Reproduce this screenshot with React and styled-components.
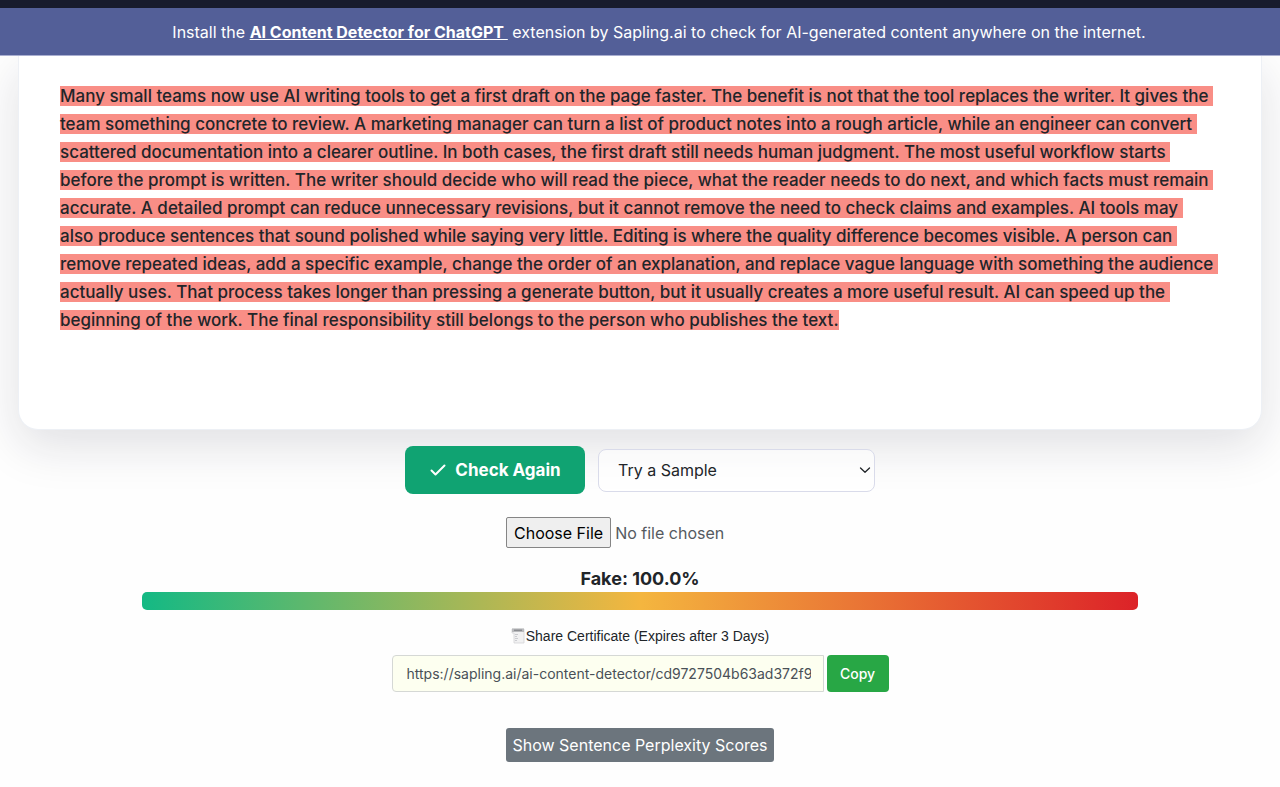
import React, { useState } from 'react'
import styled, { createGlobalStyle } from 'styled-components'

const GlobalStyle = createGlobalStyle`
    * {
        box-sizing: border-box;
    }
    body {
        margin: 0;
        background: #fefefe;
        color: #212529;
        font-family: Inter, 'Liberation Sans', sans-serif;
        font-size: 16px;
        line-height: 24px;
    }
    button, input, select {
        font-family: inherit;
    }
`

const TopStrip = styled.div`
    height: 8px;
    background: #171b2d;
`

const Banner = styled.header`
    position: relative;
    z-index: 1;
    padding: 12px 16px 11px 54px;
    border-bottom: 1px solid #a9aed0;
    background: #535f98;
    color: #fff;
    font-size: 16px;
    text-align: center;
    white-space: pre-wrap;
`

const BannerLink = styled.a`
    color: #fff;
    font-weight: 700;
    text-decoration: underline;
`

const ResultCard = styled.section`
    min-height: 374px;
    margin: 0 18px;
    padding: 26px 47px 24px 41px;
    border: 1px solid #edf0f5;
    border-top: 0;
    border-radius: 0 0 20px 20px;
    background: #fff;
    box-shadow: 0 16px 48px rgba(20, 20, 45, 0.13);
`

const ResultText = styled.p`
    margin: 0;
    font-size: 17px;
    font-weight: 500;
    line-height: 28px;
    white-space: pre-wrap;
`

const Highlight = styled.mark`
    background: #f98e86;
    color: #212529;
`

const Controls = styled.main`
    position: relative;
    display: flex;
    flex-direction: column;
    align-items: center;
    padding: 16px 18px;
`

const Row = styled.div`
    display: flex;
    align-items: center;
    gap: ${props => props.$gap}px;
`

const CheckButton = styled.button`
    display: flex;
    align-items: center;
    justify-content: center;
    gap: 8px;
    width: 180px;
    height: 48px;
    border: 0;
    border-radius: 8px;
    background: #10a372;
    color: #fff;
    font-size: 17px;
    font-weight: 700;
`

const SelectBox = styled.div`
    position: relative;
    width: 277px;

    svg {
        position: absolute;
        top: 15px;
        right: 4px;
        pointer-events: none;
    }
`

const Select = styled.select`
    width: 100%;
    height: 43px;
    padding: 0 19px;
    border: 1px solid #d9dbea;
    border-radius: 8px;
    background: rgba(255, 255, 255, 0.6);
    color: #212529;
    font-size: 16px;
    appearance: none;
`

const FileInput = styled.input`
    width: 268px;
    margin-top: 23px;
    color: #555a60;
    font-size: 16px;

    &::file-selector-button {
        height: 31px;
        margin-right: 4px;
        padding: 0 7px;
        border: 1px solid #858585;
        border-radius: 2px;
        background: #efefef;
        color: #000;
        font-family: inherit;
        font-size: 16px;
    }
`

const Score = styled.h2`
    margin: 18px 0 0;
    font-size: 18px;
    font-weight: 700;
    line-height: 26px;
`

const ScoreBar = styled.div`
    width: 80%;
    height: 18px;
    border-radius: 5px;
    background: linear-gradient(90deg, #14b984, #f4b63f 50%, #dc2228);
`

const ShareLabel = styled.label`
    display: flex;
    align-items: center;
    gap: 1px;
    margin-top: 14px;
    font-family: 'Liberation Sans', Arial, sans-serif;
    font-size: 14px;
`

const ShareInput = styled.input`
    width: 432px;
    height: 37px;
    padding: 0 12px 0 14px;
    border: 1px solid #d5d8d5;
    border-radius: 4px 0 0 4px;
    background: #fdfff0;
    color: #495057;
    font-size: 14px;
`

const ShareRow = styled(Row)`
    margin-top: 7px;
`

const CopyButton = styled.button`
    width: 62px;
    height: 37px;
    padding: 0;
    border: 0;
    border-radius: 4px;
    background: #28a745;
    color: #fff;
    font-size: 14px;
    font-weight: 500;
`

const ScoresButton = styled.button`
    width: 268px;
    height: 34px;
    margin-top: 36px;
    padding: 0;
    border: 0;
    border-radius: 3px;
    background: #6c757d;
    color: #fff;
    font-size: 16px;
    white-space: nowrap;
`

const sentences = [
    'Many small teams now use AI writing tools to get a first draft on the page faster. ',
    'The benefit is not that the tool replaces the writer. ',
    'It gives the team something concrete to review. ',
    'A marketing manager can turn a list of product notes into a rough article, while an engineer can convert scattered documentation into a clearer outline. ',
    'In both cases, the first draft still needs human judgment. ',
    'The most useful workflow starts before the prompt is written. ',
    'The writer should decide who will read the piece, what the reader needs to do next, and which facts must remain accurate. ',
    'A detailed prompt can reduce unnecessary revisions, but it cannot remove the need to check claims and examples. ',
    'AI tools may also produce sentences that sound polished while saying very little. ',
    'Editing is where the quality difference becomes visible. ',
    'A person can remove repeated ideas, add a specific example, change the order of an explanation, and replace vague language with something the audience actually uses. ',
    'That process takes longer than pressing a generate button, but it usually creates a more useful result. ',
    'AI can speed up the beginning of the work. ',
    'The final responsibility still belongs to the person who publishes the text.',
]

const CheckIcon = () => (
    <svg width="18" height="18" viewBox="0 0 18 18" fill="none" stroke="#fff" strokeWidth="2" strokeLinecap="round" strokeLinejoin="round" aria-hidden="true">
        <path d="M2.5 9.5 6.5 13.5 15.5 4.5" />
    </svg>
)

const ChevronIcon = () => (
    <svg width="12" height="12" viewBox="0 0 12 12" fill="none" stroke="#212529" strokeWidth="1.3" strokeLinecap="round" strokeLinejoin="round" aria-hidden="true">
        <path d="M1.5 4 6 8.3 10.5 4" />
    </svg>
)

const PageIcon = () => (
    <svg width="14" height="16" viewBox="0 0 14 16" aria-hidden="true">
        <path d="M1 1h12v14H3V5H1z" fill="#f1f1f2" stroke="#d4d4d7" strokeWidth="0.8" />
        <path d="M1 .5h12V4H1z" fill="#b9babd" />
        <path d="M3 2.2h8" stroke="#77797d" strokeWidth="1" />
        <path d="M4 6.5h3M4 8.5h2M4 10.5h3M4 12.5h2" stroke="#c2c3c6" strokeWidth="0.8" />
    </svg>
)

function App() {
    const [url, setUrl] = useState('https://sapling.ai/ai-content-detector/cd9727504b63ad372f9')

    const copyUrl = () => {
        navigator.clipboard.writeText(url)
    }

    return (
        <div>
            <GlobalStyle />
            <TopStrip />
            <Banner>
                Install the <BannerLink href="#extension">{'AI Content Detector for ChatGPT '}</BannerLink> extension by Sapling.ai to check for AI-generated content anywhere on the internet.
            </Banner>
            <ResultCard>
                <ResultText>
                    {sentences.map((sentence, i) => (
                        <Highlight key={i}>{sentence}</Highlight>
                    ))}
                </ResultText>
            </ResultCard>
            <Controls>
                <Row $gap={13}>
                    <CheckButton type="button">
                        <CheckIcon />
                        Check Again
                    </CheckButton>
                    <SelectBox>
                        <Select aria-label="Sample text">
                            <option>Try a Sample</option>
                        </Select>
                        <ChevronIcon />
                    </SelectBox>
                </Row>
                <FileInput type="file" aria-label="Upload a file" />
                <Score>Fake: 100.0%</Score>
                <ScoreBar />
                <ShareLabel htmlFor="share-url">
                    <PageIcon />
                    Share Certificate (Expires after 3 Days)
                </ShareLabel>
                <ShareRow $gap={3}>
                    <ShareInput id="share-url" value={url} onChange={e => setUrl(e.target.value)} />
                    <CopyButton type="button" onClick={copyUrl}>Copy</CopyButton>
                </ShareRow>
                <ScoresButton type="button">Show Sentence Perplexity Scores</ScoresButton>
            </Controls>
        </div>
    )
}

export default App
